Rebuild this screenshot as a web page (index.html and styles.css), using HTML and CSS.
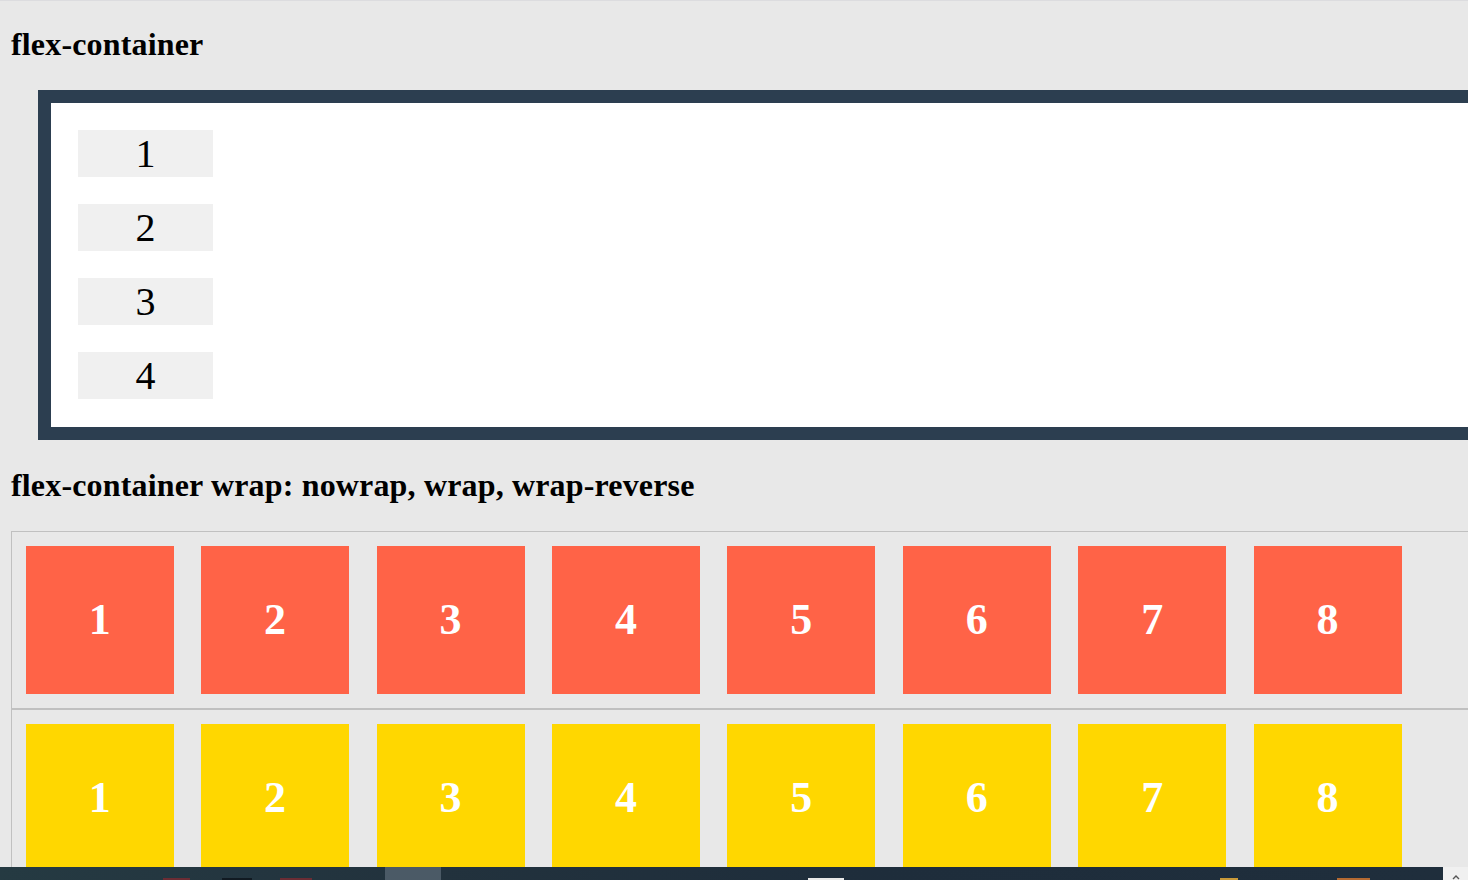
FILE: index.html
```html
<!DOCTYPE html>
<html lang="en">
<head>
<meta charset="utf-8">
<title>flex-container</title>
<link rel="stylesheet" href="styles.css">
</head>
<body>
  <h2 class="title title-first">flex-container</h2>
  <div class="box">
    <div class="box-item">1</div>
    <div class="box-item">2</div>
    <div class="box-item">3</div>
    <div class="box-item">4</div>
  </div>

  <h2 class="title title-second">flex-container wrap: nowrap, wrap, wrap-reverse</h2>
  <div class="wrap-row">
    <div class="tile tile-red">1</div>
    <div class="tile tile-red">2</div>
    <div class="tile tile-red">3</div>
    <div class="tile tile-red">4</div>
    <div class="tile tile-red">5</div>
    <div class="tile tile-red">6</div>
    <div class="tile tile-red">7</div>
    <div class="tile tile-red">8</div>
  </div>
  <div class="wrap-row">
    <div class="tile tile-gold">1</div>
    <div class="tile tile-gold">2</div>
    <div class="tile tile-gold">3</div>
    <div class="tile tile-gold">4</div>
    <div class="tile tile-gold">5</div>
    <div class="tile tile-gold">6</div>
    <div class="tile tile-gold">7</div>
    <div class="tile tile-gold">8</div>
  </div>

  <div class="taskbar">
    <div class="taskbar-main">
      <span class="tb-active"></span>
      <span class="tb-dot tb-dot-a"></span>
      <span class="tb-dot tb-dot-b"></span>
      <span class="tb-dot tb-dot-c"></span>
      <span class="tb-dot tb-dot-d"></span>
      <span class="tb-dot tb-dot-e"></span>
      <span class="tb-dot tb-dot-f"></span>
    </div>
    <div class="taskbar-corner">
      <svg class="caret" width="8" height="6" viewBox="0 0 8 6"><path d="M1 5 L4 2 L7 5" fill="none" stroke="#555" stroke-width="1.4"/></svg>
    </div>
  </div>
</body>
</html>
```

FILE: styles.css
```css
html {
  background: #e8e8e8;
  overflow: hidden;
}

body {
  margin: 0;
  padding: 0 0 0 11px;
  border-top: 1px solid #dcdcdf;
  font-family: "Liberation Serif", "Times New Roman", serif;
  color: #000;
  width: 1457px;
  height: 879px;
  overflow: hidden;
}

.title {
  font-size: 32px;
  font-weight: bold;
  line-height: 36px;
  letter-spacing: 0.16px;
  margin: 0;
}

.title-first {
  margin-top: 25px;
  margin-bottom: 28px;
}

.title-second {
  margin-top: 27px;
  margin-bottom: 28px;
}

.box {
  margin-left: 27px;
  width: 1500px;
  border: 13px solid #2c3e50;
  background: #fff;
  padding: 27px 27px 28px;
  display: flex;
  flex-direction: column;
  gap: 27px;
}

.box-item {
  width: 135px;
  height: 47px;
  line-height: 47px;
  background: #f0f0f0;
  text-align: center;
  font-size: 40px;
}

.wrap-row {
  width: 1500px;
  border: 1px solid #c0c0c0;
  display: flex;
  flex-wrap: nowrap;
}

.tile {
  flex: none;
  width: 148px;
  height: 148.4px;
  margin: 13.715px;
  display: flex;
  align-items: center;
  justify-content: center;
  color: #fff;
  font-weight: bold;
  font-size: 44px;
}

.tile-red {
  background: #ff6347;
}

.tile-gold {
  background: #ffd700;
}

.taskbar {
  position: fixed;
  left: 0;
  bottom: 0;
  width: 1468px;
  height: 13px;
  display: flex;
}

.taskbar-main {
  position: relative;
  width: 1443px;
  height: 13px;
  background: linear-gradient(90deg, #253a42 0%, #22323d 30%, #1e2d3b 60%, #1f2e3c 100%);
}

.tb-active {
  position: absolute;
  left: 385px;
  top: 0;
  width: 56px;
  height: 13px;
  background: #4b5a66;
}

.tb-dot {
  position: absolute;
  bottom: 0;
  height: 2px;
}

.tb-dot-a { left: 163px; width: 27px; background: #6b2c34; }
.tb-dot-b { left: 222px; width: 30px; background: #111a22; }
.tb-dot-c { left: 280px; width: 32px; background: #6b2c34; }
.tb-dot-d { left: 808px; width: 36px; background: #e8e8e8; }
.tb-dot-e { left: 1220px; width: 18px; background: #c99a3a; }
.tb-dot-f { left: 1337px; width: 33px; background: #b46a32; }

.taskbar-corner {
  width: 25px;
  height: 13px;
  background: #f0f0f0;
  display: flex;
  align-items: flex-end;
  justify-content: center;
}

.caret {
  display: block;
}
```
